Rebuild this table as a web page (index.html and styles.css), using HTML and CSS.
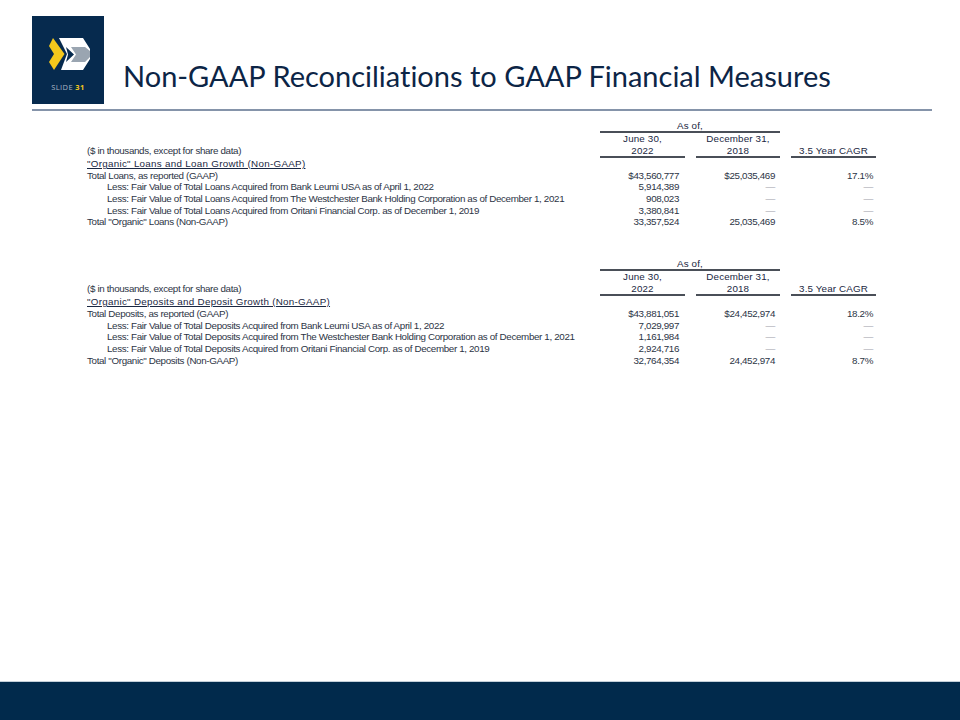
FILE: index.html
```html
<!DOCTYPE html>
<html>
<head>
<meta charset="utf-8">
<link rel="stylesheet" href="styles.css">
</head>
<body>
<div class="page">
  <header class="hdr">
    <div class="logo">
      <svg class="mark" width="72" height="40" viewBox="0 0 72 40">
        <polygon fill="#f4c81c" points="21,2 32.5,18 22,34 17,26 22,18 17,10"/>
        <polygon fill="#ffffff" points="27,2 51,2 58,13 58,23 51,34 29,34 35,18"/>
        <polygon fill="#9aa5b1" points="39,11 53,11 58,15 58,21 53,26 39,26 44,18.5"/>
        <polygon fill="#062a4e" points="34,11 42,18.5 34,26 36,18.5"/>
      </svg>
      <div class="slide">SLIDE <b>31</b></div>
    </div>
    <h1 class="title">Non-GAAP Reconciliations to GAAP Financial Measures</h1>
  </header>
  <div class="rule"></div>
  <main class="content">
    <div class="tbl">
      <div class="c r1"></div>
      <div class="c r1 hd asof">As of,</div>
      <div class="c r1"></div>

      <div class="c r2"></div>
      <div class="c r2 hd">June 30,</div>
      <div class="c r2 hd">December 31,</div>
      <div class="c r2"></div>

      <div class="c r3">($ in thousands, except for share data)</div>
      <div class="c r3 hd ul">2022</div>
      <div class="c r3 hd ul">2018</div>
      <div class="c r3 hd ul">3.5 Year CAGR</div>

      <div class="c rw sec">"Organic" Loans and Loan Growth (Non-GAAP)</div>
      <div class="c rw"></div><div class="c rw"></div><div class="c rw"></div>

      <div class="c rw">Total Loans, as reported (GAAP)</div>
      <div class="c rw v1">$43,560,777</div>
      <div class="c rw v2">$25,035,469</div>
      <div class="c rw v3">17.1%</div>

      <div class="c rw ind">Less: Fair Value of Total Loans Acquired from Bank Leumi USA as of April 1, 2022</div>
      <div class="c rw v1">5,914,389</div>
      <div class="c rw v2 d">—</div>
      <div class="c rw v3 d">—</div>

      <div class="c rw ind">Less: Fair Value of Total Loans Acquired from The Westchester Bank Holding Corporation as of December 1, 2021</div>
      <div class="c rw v1">908,023</div>
      <div class="c rw v2 d">—</div>
      <div class="c rw v3 d">—</div>

      <div class="c rw ind">Less: Fair Value of Total Loans Acquired from Oritani Financial Corp. as of December 1, 2019</div>
      <div class="c rw v1">3,380,841</div>
      <div class="c rw v2 d">—</div>
      <div class="c rw v3 d">—</div>

      <div class="c rw">Total "Organic" Loans (Non-GAAP)</div>
      <div class="c rw v1">33,357,524</div>
      <div class="c rw v2">25,035,469</div>
      <div class="c rw v3">8.5%</div>
    </div>

    <div class="tbl second">
      <div class="c r1"></div>
      <div class="c r1 hd asof">As of,</div>
      <div class="c r1"></div>

      <div class="c r2"></div>
      <div class="c r2 hd">June 30,</div>
      <div class="c r2 hd">December 31,</div>
      <div class="c r2"></div>

      <div class="c r3">($ in thousands, except for share data)</div>
      <div class="c r3 hd ul">2022</div>
      <div class="c r3 hd ul">2018</div>
      <div class="c r3 hd ul">3.5 Year CAGR</div>

      <div class="c rw sec">"Organic" Deposits and Deposit Growth (Non-GAAP)</div>
      <div class="c rw"></div><div class="c rw"></div><div class="c rw"></div>

      <div class="c rw">Total Deposits, as reported (GAAP)</div>
      <div class="c rw v1">$43,881,051</div>
      <div class="c rw v2">$24,452,974</div>
      <div class="c rw v3">18.2%</div>

      <div class="c rw ind">Less: Fair Value of Total Deposits Acquired from Bank Leumi USA as of April 1, 2022</div>
      <div class="c rw v1">7,029,997</div>
      <div class="c rw v2 d">—</div>
      <div class="c rw v3 d">—</div>

      <div class="c rw ind">Less: Fair Value of Total Deposits Acquired from The Westchester Bank Holding Corporation as of December 1, 2021</div>
      <div class="c rw v1">1,161,984</div>
      <div class="c rw v2 d">—</div>
      <div class="c rw v3 d">—</div>

      <div class="c rw ind">Less: Fair Value of Total Deposits Acquired from Oritani Financial Corp. as of December 1, 2019</div>
      <div class="c rw v1">2,924,716</div>
      <div class="c rw v2 d">—</div>
      <div class="c rw v3 d">—</div>

      <div class="c rw">Total "Organic" Deposits (Non-GAAP)</div>
      <div class="c rw v1">32,764,354</div>
      <div class="c rw v2">24,452,974</div>
      <div class="c rw v3">8.7%</div>
    </div>
  </main>
  <footer class="foot"></footer>
</div>
</body>
</html>
```

FILE: styles.css
```css
html, body {
  margin: 0;
  padding: 0;
  background: #ffffff;
}

.page {
  width: 960px;
  height: 720px;
  display: flex;
  flex-direction: column;
  background: #ffffff;
  overflow: hidden;
}

.hdr {
  display: flex;
  padding: 16px 0 0 32px;
  height: 88px;
}

.logo {
  width: 72px;
  height: 88px;
  background: #062a4e;
  box-sizing: border-box;
  padding-top: 20px;
  display: flex;
  flex-direction: column;
  align-items: center;
  flex-shrink: 0;
}

.mark {
  display: block;
}

.slide {
  margin-top: 6px;
  font-family: "Open Sans", "Liberation Sans", sans-serif;
  font-size: 7.5px;
  line-height: 10px;
  letter-spacing: 0.4px;
  color: #a9b5c4;
}

.slide b {
  color: #f4c81c;
  font-weight: 700;
}

.title {
  margin: 44px 0 0 19px;
  font-family: Lato, "Open Sans", sans-serif;
  font-weight: 400;
  font-size: 29px;
  line-height: 32px;
  color: #0c2546;
  white-space: nowrap;
  font-variant-ligatures: none;
  font-feature-settings: "liga" 0;
}

.rule {
  margin: 5px 28px 0 32px;
  height: 2px;
  background: #8594aa;
}

.content {
  padding-left: 87px;
}

.tbl {
  margin-top: 9px;
  display: grid;
  grid-template-columns: 502px 85px 84px 85px;
  column-gap: 11px;
  font-family: "Liberation Sans", Arial, sans-serif;
  font-size: 9.8px;
  letter-spacing: -0.35px;
  color: #2c3445;
}

.tbl.second {
  margin-top: 30px;
}

.c {
  box-sizing: border-box;
  white-space: nowrap;
}

.r1 {
  height: 13px;
  line-height: 11px;
}

.r2 {
  height: 12px;
  line-height: 12px;
}

.r3 {
  height: 13px;
  line-height: 11px;
}

.rw {
  height: 11.7px;
  line-height: 11.7px;
}

.hd {
  text-align: center;
  letter-spacing: 0.15px;
  color: #1a2742;
}

.asof {
  grid-column: span 2;
  border-bottom: 2px solid #4a4f58;
}

.ul {
  border-bottom: 2px solid #4a4f58;
}

.sec {
  letter-spacing: 0.29px;
  color: #1a2742;
  text-decoration: underline;
  text-underline-offset: 1px;
}

.ind {
  padding-left: 20px;
}

.v1 {
  text-align: right;
  padding-right: 6px;
}

.v2 {
  text-align: right;
  padding-right: 5px;
}

.v3 {
  text-align: right;
  padding-right: 3px;
}

.d {
  color: #9aa0aa;
}

.foot {
  margin-top: auto;
  height: 39px;
  box-sizing: border-box;
  border-top: 1px solid #c3cfd9;
  background: #012a4c;
  flex-shrink: 0;
}
```
